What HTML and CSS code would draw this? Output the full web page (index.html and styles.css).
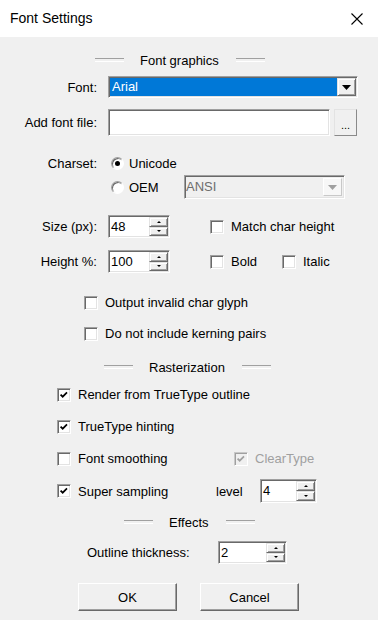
FILE: index.html
```html
<!DOCTYPE html>
<html lang="en">
<head>
    <meta charset="UTF-8">
    <title>Font Settings</title>
    <link rel="stylesheet" href="styles.css">
</head>
<body>
    <div class="dialog">
        <div class="titlebar">
            <span class="title">Font Settings</span>
            <svg class="close" width="12" height="12" viewBox="0 0 12 12">
                <path d="M0.5 0.5 L11.5 11.5 M11.5 0.5 L0.5 11.5" stroke="#000" stroke-width="1.1" fill="none"/>
            </svg>
        </div>

        <div class="content">
            <div class="group-head head-font mt15"><span>Font graphics</span></div>

            <div class="row mt8">
                <span class="label">Font:</span>
                <div class="combo sunken">
                    <div class="combo-value">Arial</div>
                    <div class="combo-btn raised">
                        <svg width="9" height="5" viewBox="0 0 9 5"><polygon points="0,0 9,0 4.5,5" fill="#000"/></svg>
                    </div>
                </div>
            </div>

            <div class="row mt11">
                <span class="label">Add font file:</span>
                <div class="textbox sunken"></div>
                <div class="browse raised">...</div>
            </div>

            <div class="row mt20">
                <span class="label">Charset:</span>
                <span class="radio sunken checked"></span>
                <span class="radio-text">Unicode</span>
            </div>

            <div class="row mt4">
                <span class="label"></span>
                <span class="radio sunken"></span>
                <span class="radio-text wide">OEM</span>
                <div class="combo combo-off sunken">
                    <div class="combo-value">ANSI</div>
                    <div class="combo-btn raised">
                        <svg width="9" height="5" viewBox="0 0 9 5"><polygon points="0,0 9,0 4.5,5" fill="#a0a0a0"/></svg>
                    </div>
                </div>
            </div>

            <div class="row mt16">
                <span class="label">Size (px):</span>
                <div class="spin sunken">
                    <span class="spin-text">48</span>
                    <div class="spin-btns">
                        <span class="spin-btn raised"><i class="up"></i></span>
                        <span class="spin-btn raised"><i class="down"></i></span>
                    </div>
                </div>
                <span class="check sunken gap40"></span>
                <span class="check-text">Match char height</span>
            </div>

            <div class="row mt12">
                <span class="label">Height %:</span>
                <div class="spin sunken">
                    <span class="spin-text">100</span>
                    <div class="spin-btns">
                        <span class="spin-btn raised"><i class="up"></i></span>
                        <span class="spin-btn raised"><i class="down"></i></span>
                    </div>
                </div>
                <span class="check sunken gap40"></span>
                <span class="check-text w51">Bold</span>
                <span class="check sunken"></span>
                <span class="check-text">Italic</span>
            </div>

            <div class="row mt22 indent84">
                <span class="check sunken"></span>
                <span class="check-text">Output invalid char glyph</span>
            </div>

            <div class="row mt16 indent84">
                <span class="check sunken"></span>
                <span class="check-text">Do not include kerning pairs</span>
            </div>

            <div class="group-head head-raster mt18"><span>Rasterization</span></div>

            <div class="row mt12 indent57">
                <span class="check sunken on"><svg viewBox="0 0 14 14"><polyline points="3,6.5 5.5,9 10.5,4" /></svg></span>
                <span class="check-text">Render from TrueType outline</span>
            </div>

            <div class="row mt17 indent57">
                <span class="check sunken on"><svg viewBox="0 0 14 14"><polyline points="3,6.5 5.5,9 10.5,4" /></svg></span>
                <span class="check-text">TrueType hinting</span>
            </div>

            <div class="row mt17 indent57">
                <span class="check sunken"></span>
                <span class="check-text w156">Font smoothing</span>
                <span class="check sunken on disabled"><svg viewBox="0 0 14 14"><polyline points="3,6.5 5.5,9 10.5,4" /></svg></span>
                <span class="check-text disabled-text">ClearType</span>
            </div>

            <div class="row mt13 indent57">
                <span class="check sunken on"><svg viewBox="0 0 14 14"><polyline points="3,6.5 5.5,9 10.5,4" /></svg></span>
                <span class="check-text w138">Super sampling</span>
                <span class="level">level</span>
                <div class="spin spin-level sunken">
                    <span class="spin-text">4</span>
                    <div class="spin-btns">
                        <span class="spin-btn raised"><i class="up"></i></span>
                        <span class="spin-btn raised"><i class="down"></i></span>
                    </div>
                </div>
            </div>

            <div class="group-head head-effects mt11"><span>Effects</span></div>

            <div class="row mt11 indent87">
                <span class="outline-label">Outline thickness:</span>
                <div class="spin spin-outline sunken">
                    <span class="spin-text">2</span>
                    <div class="spin-btns">
                        <span class="spin-btn raised"><i class="up"></i></span>
                        <span class="spin-btn raised"><i class="down"></i></span>
                    </div>
                </div>
            </div>

            <div class="row mt19 indent78">
                <button class="btn raised">OK</button>
                <button class="btn raised gap23">Cancel</button>
            </div>
        </div>
    </div>
</body>
</html>
```

FILE: styles.css
```css
* {
    box-sizing: border-box;
}

body {
    margin: 0;
    font-family: "Liberation Sans", Arial, sans-serif;
    font-size: 13px;
    line-height: 15px;
    color: #000;
    background: #f0f0f0;
}

.dialog {
    width: 378px;
    height: 620px;
    background: #f0f0f0;
    overflow: hidden;
}

.titlebar {
    height: 37px;
    background: #fff;
    display: flex;
    align-items: center;
    justify-content: space-between;
    padding: 0 15px 0 10px;
}

.title {
    font-size: 14px;
}

/* 3d borders */
.sunken {
    border: 1px solid;
    border-color: #a0a0a0 #fff #fff #a0a0a0;
    box-shadow: inset 1px 1px 0 #696969, inset -1px -1px 0 #e3e3e3;
    background: #fff;
}

.raised {
    border: 1px solid;
    border-color: #e3e3e3 #696969 #696969 #e3e3e3;
    box-shadow: inset 1px 1px 0 #fff, inset -1px -1px 0 #a0a0a0;
    background: #f0f0f0;
}

.row {
    display: flex;
    align-items: center;
}

.label {
    flex: none;
    width: 97px;
    margin-right: 11px;
    text-align: right;
}

/* group headers */
.group-head {
    display: flex;
    align-items: center;
    height: 16px;
}

.group-head::before,
.group-head::after {
    content: "";
    width: 29px;
    height: 2px;
    border-top: 1px solid #a0a0a0;
    border-bottom: 1px solid #fff;
}

.group-head span {
    margin: 0 17px 0 16px;
}

.head-font { padding-left: 95px; }
.head-raster { padding-left: 104px; }
.head-effects { padding-left: 124px; }

/* combo boxes */
.combo {
    display: flex;
    width: 250px;
    height: 22px;
    padding: 1px;
}

.combo-value {
    flex: 1;
    background: #0078d7;
    color: #fff;
    padding-left: 2px;
    line-height: 18px;
}

.combo-btn {
    width: 19px;
    display: flex;
    align-items: center;
    justify-content: center;
}

.combo-off {
    width: 161px;
    height: 24px;
    background: #f0f0f0;
}

.combo-off .combo-value {
    background: transparent;
    color: #6d6d6d;
    padding-left: 0;
    line-height: 20px;
}

.combo-off .combo-btn {
    margin: 1px 1px 1px 0;
    background: #f7f7f7;
    border-color: #fff #c8c8c8 #c8c8c8 #fff;
    box-shadow: none;
}

.textbox {
    width: 222px;
    height: 27px;
}

.browse {
    width: 23px;
    height: 27px;
    margin-left: 4px;
    text-align: center;
    line-height: 30px;
    font-size: 11px;
    border-color: #e3e3e3 #8a8a8a #8a8a8a #e3e3e3;
    box-shadow: none;
}

/* radio buttons */
.radio {
    flex: none;
    position: relative;
    width: 13px;
    height: 13px;
    margin-left: 3px;
    border-radius: 50%;
    box-shadow: inset 1px 1px 0 #696969;
}

.radio.checked::after {
    content: "";
    position: absolute;
    left: 3px;
    top: 3px;
    width: 5px;
    height: 5px;
    border-radius: 50%;
    background: #000;
}

.radio-text {
    margin-left: 5px;
}

.radio-text.wide {
    width: 55px;
}

/* spin boxes */
.spin {
    display: flex;
    width: 62px;
    height: 23px;
    padding: 1px;
}

.spin-text {
    flex: 1;
    padding-left: 1px;
    line-height: 19px;
}

.spin-btns {
    width: 19px;
    display: flex;
    flex-direction: column;
}

.spin-btn {
    flex: 1;
    display: flex;
    align-items: center;
    justify-content: center;
}

.spin-btn i {
    width: 0;
    height: 0;
    border-left: 2px solid transparent;
    border-right: 2px solid transparent;
}

.spin-btn i.up { border-bottom: 2px solid #000; }
.spin-btn i.down { border-top: 2px solid #000; }

.spin-level {
    width: 57px;
    height: 24px;
}

.spin-outline {
    width: 69px;
}

/* checkboxes */
.check {
    flex: none;
    width: 14px;
    height: 14px;
    display: flex;
}

.check svg {
    width: 12px;
    height: 12px;
}

.check polyline {
    fill: none;
    stroke: #000;
    stroke-width: 2;
}

.check.disabled {
    background: #f0f0f0;
    border-color: #c8c8c8 #fff #fff #c8c8c8;
    box-shadow: inset 1px 1px 0 #a0a0a0;
}

.check.disabled polyline {
    stroke: #a0a0a0;
}

.check-text {
    margin-left: 7px;
}

.disabled-text {
    color: #a0a0a0;
}

.gap40 { margin-left: 40px; }
.gap23 { margin-left: 23px; }
.w51 { width: 51px; }
.w156 { width: 156px; }
.w138 { width: 138px; }

.level {
    width: 44px;
}

.outline-label {
    width: 131px;
}

.indent57 { padding-left: 57px; }
.indent78 { padding-left: 78px; }
.indent84 { padding-left: 84px; }
.indent87 { padding-left: 87px; }

/* buttons */
.btn {
    width: 99px;
    height: 28px;
    font-family: inherit;
    font-size: 13px;
    color: #000;
    padding: 0;
    border-color: #fff #696969 #696969 #fff;
    box-shadow: inset -1px -1px 0 #a0a0a0;
}

/* vertical spacing between rows */
.mt4 { margin-top: 4px; }
.mt8 { margin-top: 8px; }
.mt11 { margin-top: 11px; }
.mt12 { margin-top: 12px; }
.mt13 { margin-top: 13px; }
.mt15 { margin-top: 15px; }
.mt16 { margin-top: 16px; }
.mt17 { margin-top: 17px; }
.mt18 { margin-top: 18px; }
.mt19 { margin-top: 19px; }
.mt20 { margin-top: 20px; }
.mt22 { margin-top: 22px; }
```
